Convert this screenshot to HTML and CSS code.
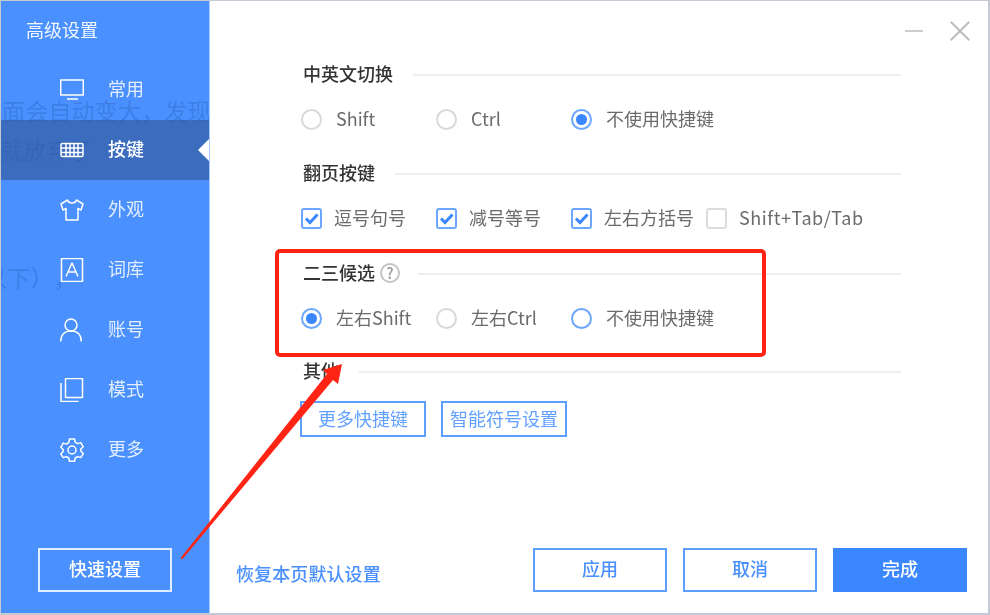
FILE: index.html
```html
<!DOCTYPE html>
<html lang="zh-CN">
<head>
<meta charset="utf-8">
<title>高级设置</title>
<link rel="stylesheet" href="styles.css">
</head>
<body>
<div class="window">
  <aside class="sidebar">
    <div class="ghost ghost-a">面会自动变大，发现</div>
    <div class="ghost ghost-b">就放弃了</div>
    <div class="ghost ghost-c">以下），</div>
    <div class="side-title">高级设置</div>
    <nav class="nav">
      <div class="nav-item">
        <svg class="nav-icon" viewBox="0 0 24 24"><path d="M.7 2h22.600v15H.7zM7 21h11"/></svg>
        <span>常用</span>
      </div>
      <div class="nav-item active">
        <svg class="nav-icon" viewBox="0 0 24 24"><path d="M2.500 5.500h19a1.500 1.500 0 0 1 1.500 1.500v10a1.500 1.500 0 0 1-1.500 1.500h-19A1.500 1.500 0 0 1 1 17V7a1.500 1.500 0 0 1 1.500-1.500zM1 10h22M1 14.500h22M6 5.500v13M10 5.500v13M14 5.500v13M18 5.500v13"/></svg>
        <span>按键</span>
      </div>
      <div class="nav-item">
        <svg class="nav-icon" viewBox="0 0 24 24"><path d="M7.500 2 1 6l2 6 3-1.500V22h12V10.500l3 1.500 2-6-6.500-4c-1 4-8 4-9 0z"/></svg>
        <span>外观</span>
      </div>
      <div class="nav-item">
        <svg class="nav-icon" viewBox="0 0 24 24"><path d="M1.500.5h21v23h-21zM6 18.500 12 5l6 13.500M8 14h8"/></svg>
        <span>词库</span>
      </div>
      <div class="nav-item">
        <svg class="nav-icon" viewBox="0 0 24 24"><circle cx="11" cy="7" r="6"/><path d="M.7 23.500c0-7 4.300-10.500 10.300-10.500s10.300 3.500 10.300 10.500"/></svg>
        <span>账号</span>
      </div>
      <div class="nav-item">
        <svg class="nav-icon" viewBox="0 0 24 24"><path d="M5.500.5h17v19h-17zM1 5v18.500h17.500"/></svg>
        <span>模式</span>
      </div>
      <div class="nav-item">
        <svg class="nav-icon" viewBox="0 0 24 24"><circle cx="12" cy="12" r="4"/><path d="M9.500 1h5l.8 3.300 2.300 1.300 3.200-1 2.400 4.200-2.400 2.300v2l2.400 2.500-2.400 4-3.200-1-2.300 1.400-.8 3.200h-5l-.8-3.200-2.300-1.400-3.200 1L.8 16.100l2.400-2.500v-2L.8 9.300l2.400-4.200 3.200 1 2.300-1.400z"/></svg>
        <span>更多</span>
      </div>
    </nav>
    <button class="quick">快速设置</button>
  </aside>

  <main class="main">
    <header class="titlebar">
      <svg class="win-btn min" viewBox="0 0 18 18"><path d="M0 9h18"/></svg>
      <svg class="win-btn close" viewBox="0 0 20 20"><path d="M.7.700l18.600 18.600M19.300.700.700 19.300"/></svg>
    </header>

    <section class="section">
      <div class="sec-head"><h2>中英文切换</h2><i class="rule"></i></div>
      <div class="options">
        <label class="opt"><i class="radio"></i>Shift</label>
        <label class="opt"><i class="radio"></i>Ctrl</label>
        <label class="opt"><i class="radio on"></i>不使用快捷键</label>
      </div>
    </section>

    <section class="section">
      <div class="sec-head"><h2>翻页按键</h2><i class="rule"></i></div>
      <div class="options">
        <label class="opt"><i class="check on"><svg viewBox="0 0 17 17"><path d="M3 8.500l4 4 7.500-8"/></svg></i>逗号句号</label>
        <label class="opt"><i class="check on"><svg viewBox="0 0 17 17"><path d="M3 8.500l4 4 7.500-8"/></svg></i>减号等号</label>
        <label class="opt"><i class="check on"><svg viewBox="0 0 17 17"><path d="M3 8.500l4 4 7.500-8"/></svg></i>左右方括号</label>
        <label class="opt wide"><i class="check"></i>Shift+Tab/Tab</label>
      </div>
    </section>

    <section class="section tall">
      <div class="sec-head"><h2>二三候选</h2><span class="help">?</span><i class="rule"></i></div>
      <div class="options">
        <label class="opt"><i class="radio on"></i>左右Shift</label>
        <label class="opt"><i class="radio"></i>左右Ctrl</label>
        <label class="opt"><i class="radio blue"></i>不使用快捷键</label>
      </div>
    </section>

    <section class="section short">
      <div class="sec-head"><h2>其他</h2><i class="rule"></i></div>
      <div class="links">
        <button class="link-btn">更多快捷键</button>
        <button class="link-btn">智能符号设置</button>
      </div>
    </section>

    <footer class="footer">
      <a class="restore">恢复本页默认设置</a>
      <div class="actions">
        <button class="act">应用</button>
        <button class="act">取消</button>
        <button class="act primary">完成</button>
      </div>
    </footer>
  </main>

  <div class="mark-box"></div>
  <svg class="mark-arrow" viewBox="0 0 990 615"><polygon points="181,559 182.500,559 333,380 338,384 342,364 323,370 327,374 181,557.500"/></svg>
</div>
</body>
</html>
```

FILE: styles.css
```css
* { box-sizing: border-box; }
html, body { margin: 0; padding: 0; background: #fff; }
body { width: 990px; height: 615px; overflow: hidden; font-family: "Noto Sans CJK SC", "Noto Sans", sans-serif; }

.window {
  position: relative;
  width: 990px;
  height: 615px;
  display: flex;
  border: solid #c3cad6;
  border-width: 1px 2px 2px 1px;
  background: #fff;
  filter: blur(.55px);
}

/* sidebar */
.sidebar {
  position: relative;
  width: 209px;
  flex: none;
  display: flex;
  flex-direction: column;
  background: #4a90ff;
  border-right: 1px solid #a9cbff;
  color: #fff;
  overflow: hidden;
}
.ghost { position: absolute; font-size: 23px; line-height: 30px; color: #3d7fe4; white-space: nowrap; letter-spacing: .2px; text-spacing-trim: space-all; }
.ghost-a { left: 1px; top: 94px; }
.ghost-b { left: -1px; top: 133px; }
.ghost-c { left: -17px; top: 261px; }

.side-title { position: relative; font-size: 18px; line-height: 30px; height: 59px; padding: 13px 0 0 25px; color: #f2f7ff; }
.nav { position: relative; display: flex; flex-direction: column; }
.nav-item {
  position: relative;
  height: 60px;
  display: flex;
  align-items: center;
  gap: 24px;
  padding-left: 59px;
  font-size: 18px;
  color: #e3eeff;
}
.nav-item span { padding-bottom: 4px; }
.nav-item.active { background: rgba(50, 85, 150, .62); color: #fff; font-weight: 500; }
.nav-item.active::after {
  content: "";
  position: absolute;
  right: -1px;
  top: 18px;
  border: solid transparent;
  border-width: 12px 12px 12px 0;
  border-right-color: #fff;
}
.nav-icon { width: 24px; height: 24px; fill: none; stroke: #fff; stroke-width: 1.500; stroke-linejoin: round; flex: none; }

.quick {
  position: absolute;
  left: 37px;
  top: 547px;
  width: 134px;
  height: 44px;
  background: none;
  border: 2px solid #e3eeff;
  color: #fff;
  font: 500 18px "Noto Sans CJK SC", sans-serif;
  padding: 0 0 4px;
}

/* main */
.main { flex: 1; display: flex; flex-direction: column; min-width: 0; }
.titlebar {
  height: 58px;
  flex: none;
  display: flex;
  align-items: flex-start;
  justify-content: flex-end;
  gap: 27px;
  padding: 20px 18px 0 0;
}
.win-btn { fill: none; stroke: #bdbdbd; stroke-width: 2; flex: none; }
.win-btn.min { width: 18px; height: 18px; stroke-width: 1.500; margin-top: 1px; }
.win-btn.close { width: 20px; height: 20px; }

.section { height: 99px; padding: 0 87px 0 93px; flex: none; }
.section.tall { height: 98px; margin-top: 1px; }
.section.short { height: 146px; }
.sec-head { height: 30px; display: flex; align-items: center; }
.sec-head h2 { margin: 0 20px 2px 0; font-size: 18px; line-height: 28px; font-weight: 500; color: #333; flex: none; }
.section.tall h2 { margin-right: 0; }
.rule { flex: 1; height: 2px; margin-top: 2px; background: #eeeeee; }
.help {
  width: 20px;
  height: 20px;
  margin: 0 18px 0 5px;
  border: 2px solid #c4c4c4;
  border-radius: 50%;
  color: #999;
  font: 500 15px/15px "Noto Sans CJK SC", sans-serif;
  text-align: center;
  flex: none;
}

.options { display: flex; margin: 15px 0 0 -2px; height: 30px; }
.opt {
  width: 135px;
  flex: none;
  display: flex;
  align-items: center;
  padding-bottom: 2px;
  font-size: 18px;
  color: #6b6b6b;
  white-space: nowrap;
}
.opt.wide { letter-spacing: .55px; }
.radio {
  width: 21px;
  height: 21px;
  margin: 2px 14px 0 0;
  border: 2px solid #d9d9d9;
  border-radius: 50%;
  flex: none;
  display: flex;
  align-items: center;
  justify-content: center;
}
.radio.on, .radio.blue { border-color: #6ba6ff; }
.radio.on::before { content: ""; width: 11px; height: 11px; border-radius: 50%; background: #3a87ff; }
.check {
  width: 21px;
  height: 21px;
  margin: 2px 12px 0 0;
  border: 2px solid #dcdcdc;
  border-radius: 3px;
  flex: none;
  display: flex;
}
.check.on { border-color: #6ba6ff; }
.check svg { width: 17px; height: 17px; fill: none; stroke: #3a87ff; stroke-width: 3; }

.links { display: flex; gap: 15px; margin: 15px 0 0 -3px; }
.link-btn {
  width: 126px;
  height: 36px;
  padding: 0 0 2px;
  background: #fff;
  border: 2px solid #5e9eff;
  color: #62a1ff;
  font: 400 18px "Noto Sans CJK SC", sans-serif;
  white-space: nowrap;
}

.footer { display: flex; align-items: center; height: 44px; margin-top: auto; margin-bottom: 21px; padding: 0 21px 0 26px; }
.restore { color: #4a90ff; font-size: 18px; font-weight: 500; letter-spacing: .1px; margin-top: 5px; }
.actions { display: flex; gap: 16px; margin-left: auto; }
.act {
  width: 134px;
  height: 44px;
  padding: 0 0 4px;
  background: #fff;
  border: 2px solid #5e9eff;
  color: #4a90ff;
  font: 500 18px "Noto Sans CJK SC", sans-serif;
}
.act.primary { background: #3a87ff; border-color: #3a87ff; color: #fff; }

/* red annotation drawn over the screenshot */
.mark-box {
  position: absolute;
  left: 274px;
  top: 248px;
  width: 491px;
  height: 108px;
  border: 4px solid #ff2414;
  border-radius: 5px;
}
.mark-arrow { position: absolute; left: -1px; top: -1px; width: 990px; height: 615px; fill: #ff2414; pointer-events: none; }
```
